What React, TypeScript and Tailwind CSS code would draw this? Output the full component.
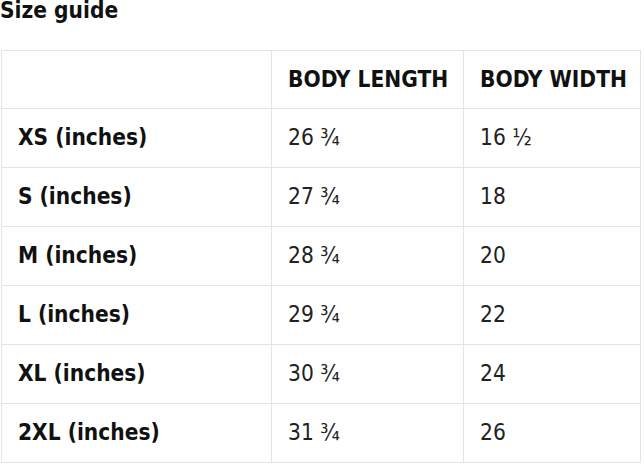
const ROWS = [
  { size: "XS (inches)", length: "26 ¾", width: "16 ½" },
  { size: "S (inches)", length: "27 ¾", width: "18" },
  { size: "M (inches)", length: "28 ¾", width: "20" },
  { size: "L (inches)", length: "29 ¾", width: "22" },
  { size: "XL (inches)", length: "30 ¾", width: "24" },
  { size: "2XL (inches)", length: "31 ¾", width: "26" },
]

export default function App() {
  return (
    <div className="w-[644px] h-[464px] overflow-hidden bg-white text-[#111] font-['DejaVu_Sans_Condensed','DejaVu_Sans',sans-serif] font-stretch-condensed">
      <h2 className="text-[22.5px] leading-[22px] font-bold -mt-[1px]">Size guide</h2>

      <table className="mt-[29px] ml-[1px] w-[640px] border-collapse table-fixed text-[22.5px] whitespace-nowrap">
        <colgroup>
          <col className="w-[270px]" />
          <col className="w-[192px]" />
          <col />
        </colgroup>
        <thead>
          <tr className="h-[58px]">
            <th className="border border-[#e4e4e4] px-4" />
            <th className="border border-[#e4e4e4] px-4 text-left font-bold">BODY LENGTH</th>
            <th className="border border-[#e4e4e4] pl-4 pr-0 text-left font-bold">BODY WIDTH</th>
          </tr>
        </thead>
        <tbody>
          {ROWS.map((r) => (
            <tr key={r.size} className="h-[59px]">
              <td className="border border-[#e4e4e4] px-4 font-bold">{r.size}</td>
              <td className="border border-[#e4e4e4] px-4 text-[#222]">{r.length}</td>
              <td className="border border-[#e4e4e4] px-4 text-[#222]">{r.width}</td>
            </tr>
          ))}
        </tbody>
      </table>
    </div>
  )
}
